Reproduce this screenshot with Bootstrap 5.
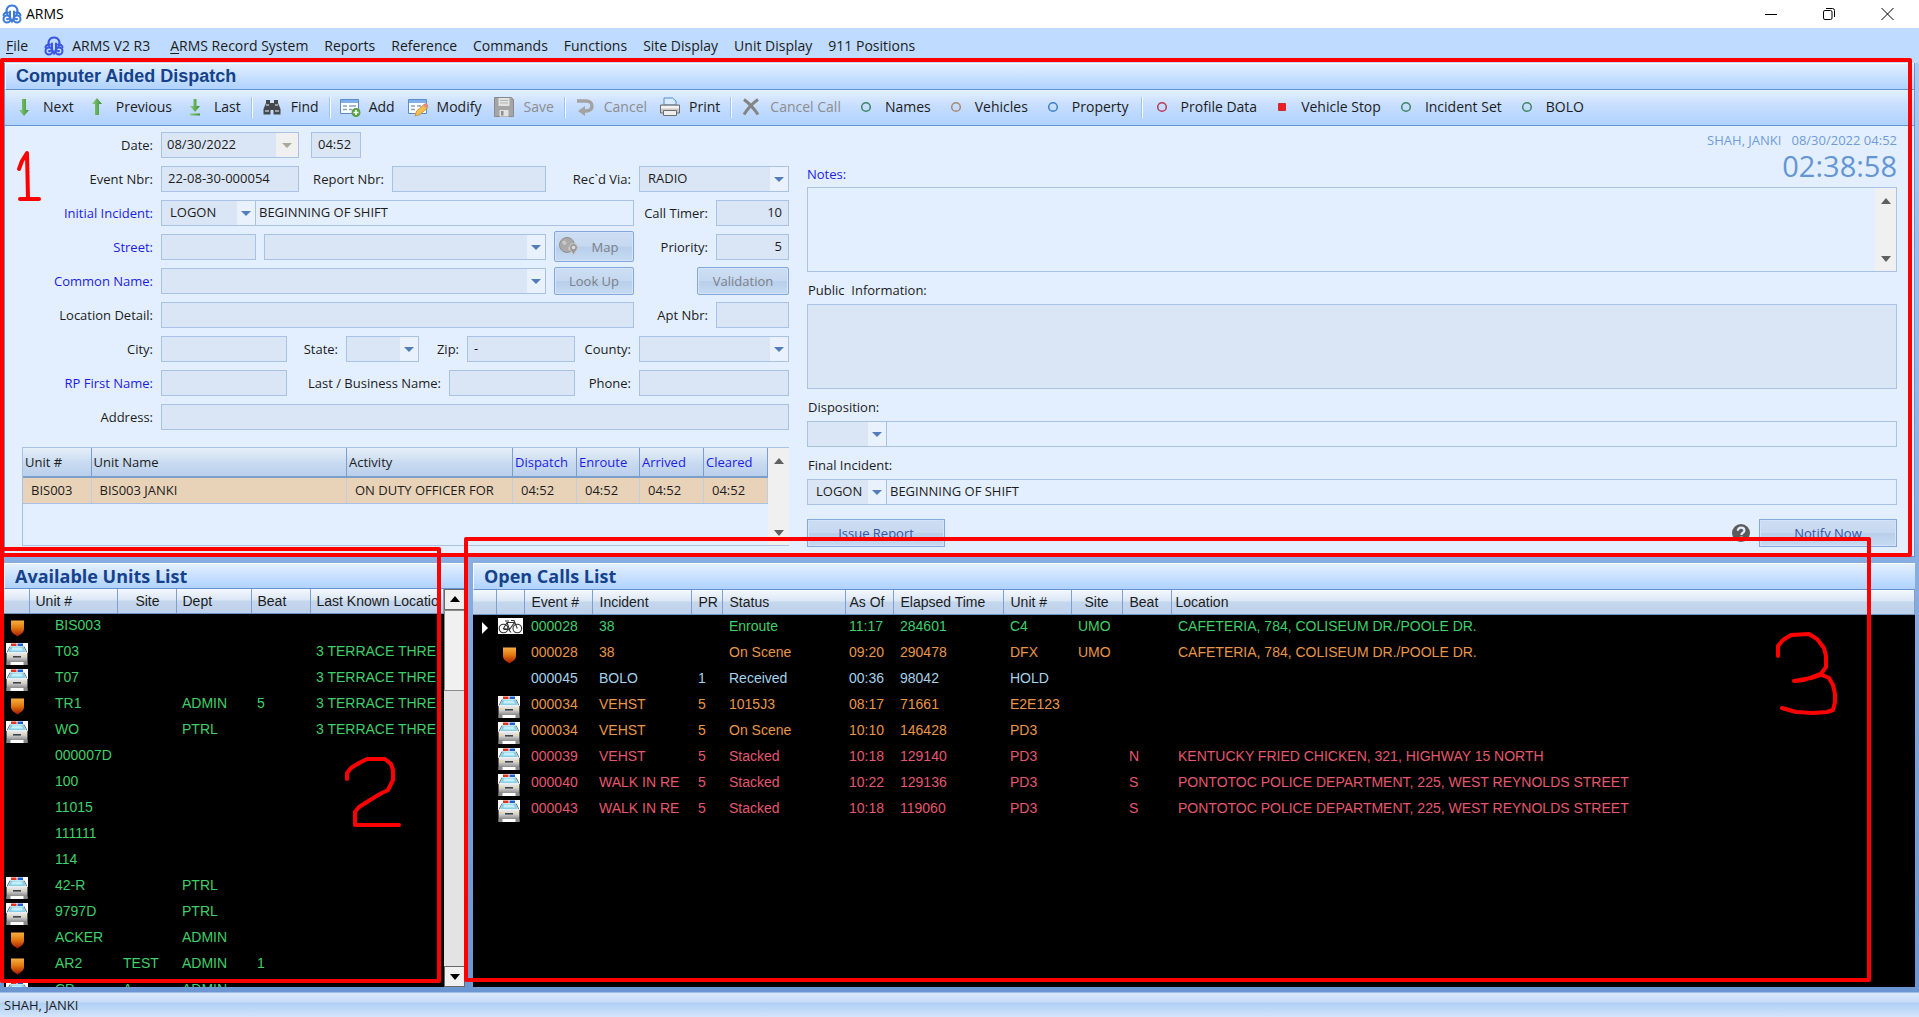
<!DOCTYPE html>
<html lang="en">
<head>
<meta charset="utf-8">
<meta name="viewport" content="width=device-width, initial-scale=1">
<title>ARMS</title>
<link href="https://cdn.jsdelivr.net/npm/bootstrap@5.3.0/dist/css/bootstrap.min.css" rel="stylesheet">
<style>
:root{--edge:#6593cf;--field:#dae6f5;--line:#a9c1e2;--pane:#e3efff;--navy:#15428b;--link:#1c1ce8}
body{font:13px/18px "Open Sans","Noto Sans",sans-serif;color:#1c1c1c;background:#6b96d2;height:100vh;overflow:hidden}
a{color:inherit;text-decoration:none}
button{padding:0;border:0;background:none;color:inherit}
svg{display:block;flex:none}
.title-bar{height:29px;background:#fff;color:#000;font-size:14px;padding:0 25px 0 2px}
.win-btns{gap:46px}
.menu-bar{height:35px;background:#bfdbff;font-size:14px;padding:0 6px;gap:16px}
.menu-bar u{text-underline-offset:2px}
.work{background:linear-gradient(#a9c8f2,#6b96d2);padding:0 4px 5px;gap:6px}
.pane-title{height:27px;margin:0;padding:0 0 0 10px;border:solid #fff;border-width:1px 0 0 1px;background:linear-gradient(#e3efff,#afd2ff);border-bottom:1px solid var(--edge);font:bold 18px/25px "Liberation Sans",Arial,sans-serif;color:var(--navy)}
.list-title{font:bold 18px/24px "Open Sans","Noto Sans",sans-serif;padding-left:10px}
.cad{border:1px solid var(--edge);border-top:0;background:var(--pane)}
.tool-bar{height:36px;padding:0 8px;gap:12px;font-size:14px;background:linear-gradient(#e3efff,#c4dcff 50%,#b0d2ff);border-bottom:1px solid var(--edge)}
.tool-bar button{display:flex;align-items:center;gap:8px;white-space:nowrap}
.tool-bar button:disabled{color:#8d8d8d}
.tool-tail{gap:14px;padding-left:2px}
.ico{width:22px;height:22px}
.split{width:2px;height:21px;margin:0 -4px 0 -2px;background:linear-gradient(90deg,#9ac6ff 50%,#fff 50%)}
.tool-tail .split{margin:0 -6px 0 -2px}
.cad-body{padding:6px 17px 9px 0;gap:18px}
.entry{width:784px;flex:none}
.rows{display:grid;grid-auto-rows:26px;row-gap:8px}
.line{display:flex;align-items:center}
.line label{flex:1;text-align:right;padding-right:8px;white-space:nowrap}
.line label.lead-label{flex:none;width:156px}
.line label.mid-label{flex:none;width:64px}
.line label.zip-label{flex:none;width:48px}
.go{color:var(--link)}
.fld{height:26px;min-width:0;border:1px solid var(--line);border-radius:0;background-color:var(--field);color:#1c1c1c;padding:0 6px 2px;font:inherit;flex:none}
.plain{background-color:var(--pane);padding-left:3px}
select.fld{appearance:none;padding-left:8px;background-image:url("data:image/svg+xml,%3Csvg xmlns='http://www.w3.org/2000/svg' width='18' height='24'%3E%3Crect width='18' height='24' fill='%23e8f1fc'/%3E%3Cpath d='M4 10h10l-5 5z' fill='%23517dbb'/%3E%3C/svg%3E");background-repeat:no-repeat;background-position:right center}
select.off{padding-left:5px;background-image:url("data:image/svg+xml,%3Csvg xmlns='http://www.w3.org/2000/svg' width='22' height='24'%3E%3Crect width='22' height='24' fill='%23f0f0f0'/%3E%3Cpath d='M6 10h10l-5 5z' fill='%23aca899'/%3E%3C/svg%3E")}
.joined{border-left:0}
.clock-in{width:50px;margin-left:12px}
.w73{width:73px}.w80{width:80px}.w92{width:92px}.w95{width:95px}.w108{width:108px}.w126{width:126px}.w138{width:138px}.w150{width:150px}.w154{width:154px}.w282{width:282px}.w378{width:378px}.w385{width:385px}.w473{width:473px}
.act{height:28px;border:1px solid #83a9dc;border-radius:2px;box-shadow:inset 0 0 0 1px #d4e4f8;background:linear-gradient(#cddef3,#c6d9f0 48%,#b9cfea 52%,#c6daf2);color:#7b8088;flex:none}
.act.live{color:#3456a8;border-radius:0;width:138px}
.act.tall{height:31px;margin-top:-2px;margin-bottom:-2px}
.log{border:1px solid var(--line);height:99px;margin:17px 0 0 17px}
.log table{width:745px;table-layout:fixed}
.log th{height:29px;font-weight:400;padding:0 2px;border-right:1px solid #7d9ecb;border-bottom:2px solid #7d9ecb;background:linear-gradient(#e6eff9,#c8daf0 55%,#b9cfeb)}
.log td{height:27px;padding:0 8px 2px;background:#e9d3b8;border-right:1px solid #c3cde0;border-bottom:1px solid #a9c1e2;white-space:nowrap;overflow:hidden}
.bar{width:21px;background:#f0f0f0;display:flex;flex-direction:column;align-items:center;justify-content:space-between;padding:10px 0 9px;flex:none}
.stamp{color:#6f9bd8;line-height:17px;gap:10px}
.clock{color:#6495d4;font-size:29px;line-height:34px}
.box{height:85px;border:1px solid var(--line);background:var(--pane)}
.box textarea{border:0;resize:none;background:none;outline:0}
.box.shade{background:var(--field)}
.cap{height:32px;display:flex;align-items:center;padding:4px 0 0 1px}
.foot-btns{padding-top:14px}
.units{width:461px;flex:none}
.work,.lists,.list-body{min-height:0}
.lists{gap:8px}
.black{background:#000;overflow:hidden;min-height:0}
.grid-list{table-layout:fixed;width:100%;font:14px/22px "Liberation Sans",Arial,sans-serif}
.grid-list th{height:25px;padding:0 0 0 7px;font-weight:400;line-height:20px;white-space:nowrap;overflow:hidden;color:#1c1c1c;background:linear-gradient(#f4f8fd,#dbe7f5 45%,#c5d7ed 50%,#bdd1ea);border-right:1px solid #7f9fcd;border-bottom:1px solid #6f93c8}
.grid-list td{height:26px;padding:0 0 2px 7px;white-space:nowrap;overflow:hidden;vertical-align:top}
.grid-list td:first-child{padding-left:0}
.units .grid-list th{padding-left:6px}
.units .grid-list td{padding-left:6px}
.units .grid-list td:nth-child(2){padding-left:26px}
.units .grid-list td:first-child{padding:0 0 0 2px}
.calls .grid-list td:nth-child(2){padding:0 0 0 2px}
.grid-list svg{margin-top:3px}
.green,.units td{color:#3fcf6b}.orange{color:#e8964a}.ice{color:#a5d2ea}.rose{color:#e4586e}
.scroll{width:21px;background:#e3e3e3;flex:none}
.scroll button{width:21px;height:21px;background:#f0f0f0;border:1px solid #696969;display:grid;place-items:center}
.thumb{height:81px;background:#f0f0f0;border:1px solid #8b8b8b}
.status{height:25px;padding:1px 4px;background:linear-gradient(#d9e8fb,#c6dbf7 38%,#b0cff5 42%,#d3e5fc);border-top:1px solid #9fbfe8}
.ink{position:absolute;left:0;top:0;pointer-events:none;fill:none;stroke:#f00;stroke-width:4}
</style>
<script src="https://cdn.jsdelivr.net/npm/bootstrap@5.3.0/dist/js/bootstrap.bundle.min.js"></script>
</head>
<body class="d-flex flex-column position-relative">
<svg width="0" height="0" class="position-absolute">
<defs>
<linearGradient id="gs" x1="0" y1="0" x2="0" y2="1"><stop offset="0" stop-color="#f6b040"/><stop offset=".45" stop-color="#e37a10"/><stop offset="1" stop-color="#a81800"/></linearGradient>
<linearGradient id="gg" x1="0" y1="0" x2="1" y2="0"><stop offset="0" stop-color="#8fce7c"/><stop offset="1" stop-color="#3a8f35"/></linearGradient>
<linearGradient id="gc" x1="0" y1="0" x2="0" y2="1"><stop offset="0" stop-color="#f2f2f2"/><stop offset=".5" stop-color="#d2d2d2"/><stop offset="1" stop-color="#8c8c8c"/></linearGradient>
<symbol id="logo" viewBox="0 0 20 20"><g fill="none" stroke="currentColor" stroke-width="2" stroke-linecap="round"><path d="M5.500 10.500C3 6 5.500 1.500 10 1.500s7 4.500 4.500 9"/><path d="M8 12V7.500M12 12V7.500"/><path d="M6 8.500c-2.500-.5-4.500 1-4.500 3M14 8.500c2.500-.5 4.500 1 4.500 3"/><circle cx="5" cy="15" r="3.500"/><circle cx="15" cy="15" r="3.500"/><path d="M5 15c1.500.5 3-.5 3-3M15 15c-1.500.5-3-.5-3-3M8.500 15l1.500 2.500 1.500-2.500"/></g></symbol>
<symbol id="shield" viewBox="0 0 22 22"><path d="M5 3.500h13v8.500c0 3.500-3 5-6.500 7.500C8 17 5 15.500 5 12z" fill="url(#gs)"/></symbol>
<symbol id="car" viewBox="0 0 22 22"><path d="M0 0h22v22H0z" fill="#fff"/><path d="M5 .5h5.500V3H5z" fill="#e3321f"/><path d="M11.500 .5H17V3h-5.500z" fill="#1c5fd0"/><path d="M4.500 3.500h13L20 9.500H2z" fill="#86cfe8"/><path d="M6.500 4.500h9l1.500 3H5z" fill="#c4effa"/><path d="M1 9.500l3-6M21 9.500l-3-6" stroke="#777"/><path d="M2 9h18l1.800 3.500V19H.2v-6.500z" fill="url(#gc)"/><path d="M0 10h.7v12H0zM21.300 10h.7v12h-.7z" fill="#222"/><path d="M7 13h8v1.600H7z" fill="#444"/><path d="M1.800 12h2.400v1.800H1.800zM17.800 12h2.400v1.800h-2.400z" fill="#efd98f"/><path d="M1 18.500h3.500V22H1zM17.500 18.500H21V22h-3.500z" fill="#8a8a8a"/></symbol>
<symbol id="bike" viewBox="0 0 25 16"><path d="M0 0h25v16H0z" fill="#fff"/><g fill="none" stroke="#333" stroke-width="1.100"><circle cx="5.500" cy="10.500" r="4.300"/><circle cx="19.300" cy="10.500" r="4.300"/><path d="M5.500 10.500L9 4.500h7.500l-5 7zM9 4.500l2.500 7H5.500M19.300 10.500L16 2.500h-3M7 3h4M11 12l2 2.500"/></g></symbol>
</defs>
</svg>

<header class="title-bar d-flex align-items-center justify-content-between">
  <div class="d-flex align-items-center gap-1"><svg width="20" height="20" color="#3c7bd9"><use href="#logo"/></svg><span>ARMS</span></div>
  <div class="win-btns d-flex align-items-center">
    <button aria-label="Minimize"><svg width="12" height="14" stroke="#000" fill="none"><path d="M0 7.500h12"/></svg></button>
    <button aria-label="Restore"><svg width="12" height="14" stroke="#000" fill="none"><rect x=".5" y="3.500" width="8.500" height="9" rx="1.500"/><path d="M3 1.500h6.500a2 2 0 0 1 2 2V10"/></svg></button>
    <button aria-label="Close"><svg width="13" height="14" stroke="#000" fill="none"><path d="M.5 1l12 12M12.500 1l-12 12"/></svg></button>
  </div>
</header>

<nav class="menu-bar d-flex align-items-center text-nowrap">
  <a href="#"><u>F</u>ile</a>
  <a href="#" class="d-flex align-items-center gap-2 me-1"><svg width="20" height="20" color="#3a55e0"><use href="#logo"/></svg>ARMS V2 R3</a>
  <a href="#"><u>A</u>RMS Record System</a><a href="#">Reports</a><a href="#">Reference</a><a href="#">Commands</a><a href="#">Functions</a><a href="#">Site Display</a><a href="#">Unit Display</a><a href="#">911 Positions</a>
</nav>

<main class="work d-flex flex-column flex-grow-1">
<section class="cad">
  <h1 class="pane-title">Computer Aided Dispatch</h1>
  <div class="tool-bar d-flex align-items-center">
    <button><svg class="ico" viewBox="0 0 22 22"><path d="M9 3h4v11h3l-5 6-5-6h3z" fill="url(#gg)"/></svg>Next</button>
    <button><svg class="ico" viewBox="0 0 22 22"><path d="M9 19h4V8h3l-5-6-5 6h3z" fill="url(#gg)"/></svg>Previous</button>
    <button><svg class="ico" viewBox="0 0 22 22"><path d="M9.500 3h3v7H16l-5 6-5-6h3.500zM6 17.500h10v2H6z" fill="url(#gg)"/></svg>Last</button>
    <span class="split"></span>
    <button><svg class="ico" viewBox="0 0 22 22"><path d="M5 4h4v3h4V4h4v3l2.500 6v5.500h-7V14h-3v4.500h-7V13L5 7z" fill="#44484d"/><path d="M5 9h3M14 9h3M4 15h4M14 15h4" stroke="#b7bcc2" stroke-width="1.500"/></svg>Find</button>
    <span class="split"></span>
    <button><svg class="ico" viewBox="0 0 22 22"><path d="M1.500 3.500h18v14h-18z" fill="#fff" stroke="#5b8bc9"/><path d="M2 4h17v3H2z" fill="#7fb0e8"/><path d="M4 10h4M4 13.500h4M10 10h7M10 13.500h3" stroke="#8aa2c2" stroke-width="1.600"/><circle cx="17" cy="16.500" r="4.500" fill="#5a9e46"/><path d="M17 14v5M14.500 16.500h5" stroke="#fff" stroke-width="1.600"/></svg>Add</button>
    <button><svg class="ico" viewBox="0 0 22 22"><path d="M1.500 3.500h18v14h-18z" fill="#fff" stroke="#5b8bc9"/><path d="M2 4h17v3H2z" fill="#7fb0e8"/><path d="M4 10h4M4 13.500h4M10 10h4" stroke="#8aa2c2" stroke-width="1.600"/><path d="M8 20l1.500-5 8-7 3.500 3.500-8 7z" fill="#f3bf52" stroke="#c98a24" stroke-width=".8"/><path d="M16 9.500l2-2c1-1 4 2 3 3l-1.500 1.500z" fill="#e48a83"/></svg>Modify</button>
    <button disabled><svg class="ico" viewBox="0 0 22 22"><path d="M1.500 1.500h17l2 2v17h-19z" fill="#a5a5a5" stroke="#8a8a8a"/><path d="M5.500 2h11v8h-11zM6.500 14h9v6.500h-9z" fill="#e2e2e2"/><path d="M7 4.500h8M7 7h8" stroke="#b5b5b5"/><path d="M8 15h2.500v4.500H8z" fill="#8d8d8d"/></svg>Save</button>
    <span class="split"></span>
    <button disabled><svg class="ico" viewBox="0 0 22 22"><path d="M3 5h9c8 0 8 10 0 10h-2" fill="none" stroke="#a3a3a3" stroke-width="3.500"/><path d="M11 10v10l-7-5z" fill="#a3a3a3"/></svg>Cancel</button>
    <button><svg class="ico" viewBox="0 0 22 22"><path d="M5 9V2h8.500L17 5v4z" fill="#d9ebff" stroke="#4f8fcb"/><path d="M1.500 9h19v8h-19z" fill="#c9c9c9" stroke="#6d6d6d"/><path d="M2 10h18v2.500H2z" fill="#f2f2f2"/><path d="M4.500 14.500h13v5h-13z" fill="#eee" stroke="#6d6d6d"/></svg>Print</button>
    <span class="split"></span>
    <button disabled><svg class="ico" viewBox="0 0 22 22"><path d="M4 3.500c4 3 10 9 14 15M18 3.500C13 7 8 12 4 18.500" fill="none" stroke="#848484" stroke-width="3"/></svg>Cancel Call</button>
    <div class="tool-tail d-flex align-items-center">
    <button><svg class="ico" viewBox="0 0 22 22"><circle cx="11" cy="11" r="4.300" fill="none" stroke="#3d8560" stroke-width="1.500"/></svg>Names</button>
    <button><svg class="ico" viewBox="0 0 22 22"><circle cx="11" cy="11" r="4.300" fill="none" stroke="#a5896f" stroke-width="1.500"/></svg>Vehicles</button>
    <button><svg class="ico" viewBox="0 0 22 22"><circle cx="11" cy="11" r="4.300" fill="none" stroke="#3d7fc4" stroke-width="1.500"/></svg>Property</button>
    <span class="split"></span>
    <button><svg class="ico" viewBox="0 0 22 22"><circle cx="11" cy="11" r="4.300" fill="none" stroke="#b83a56" stroke-width="1.500"/></svg>Profile Data</button>
    <button><svg class="ico" viewBox="0 0 22 22"><path d="M7.500 7.500h7v7h-7z" fill="#ee1c24" stroke="#c9302c"/></svg>Vehicle Stop</button>
    <button><svg class="ico" viewBox="0 0 22 22"><circle cx="11" cy="11" r="4.300" fill="none" stroke="#3d8560" stroke-width="1.500"/></svg>Incident Set</button>
    <button><svg class="ico" viewBox="0 0 22 22"><circle cx="11" cy="11" r="4.300" fill="none" stroke="#3d8560" stroke-width="1.500"/></svg>BOLO</button>
    </div>
  </div>

  <div class="cad-body d-flex">
    <form class="entry">
      <div class="rows">
        <div class="line"><label class="lead-label" for="date">Date:</label><select id="date" class="fld off w138"><option>08/30/2022</option></select><input class="fld clock-in" aria-label="Time" value="04:52"></div>
        <div class="line"><label class="lead-label" for="ev">Event Nbr:</label><input id="ev" class="fld w138" value="22-08-30-000054"><label for="rep">Report Nbr:</label><input id="rep" class="fld w154"><label for="via">Rec`d Via:</label><select id="via" class="fld w150"><option>RADIO</option></select></div>
        <div class="line"><label class="lead-label go" for="inc">Initial Incident:</label><select id="inc" class="fld w95"><option>LOGON</option></select><input class="fld plain joined w378" aria-label="Incident description" value="BEGINNING OF SHIFT"><label for="timer">Call Timer:</label><input id="timer" class="fld w73 text-end" value="10"></div>
        <div class="line"><label class="lead-label go" for="st">Street:</label><input id="st" class="fld w95"><select class="fld w282 ms-2" aria-label="Street name"><option></option></select><button type="button" class="act tall w80 ms-2 d-flex align-items-center ps-1" disabled><svg width="22" height="22"><circle cx="8" cy="9" r="7.500" fill="#aaa" stroke="#8f8f8f"/><path d="M3 6c3-3 5 0 4 2s-3 1-4-2M9 12c1-2 4-1 4 0l-3 3z" fill="#c9c9c9"/><path d="M14.500 19c-2-4-4-5-4-7.500a4 4 0 0 1 8 0c0 2.500-2 3.500-4 7.500z" fill="#999" stroke="#cfcfcf"/><circle cx="14.500" cy="11.500" r="1.800" fill="#ddd"/></svg><span class="flex-grow-1 pe-1">Map</span></button><label for="pri">Priority:</label><input id="pri" class="fld w73 text-end" value="5"></div>
        <div class="line"><label class="lead-label go" for="cn">Common Name:</label><select id="cn" class="fld w385"><option></option></select><button type="button" class="act w80 ms-2" disabled>Look Up</button><button type="button" class="act w92 ms-auto" disabled>Validation</button></div>
        <div class="line"><label class="lead-label" for="loc">Location Detail:</label><input id="loc" class="fld w473"><label for="apt">Apt Nbr:</label><input id="apt" class="fld w73"></div>
        <div class="line"><label class="lead-label" for="city">City:</label><input id="city" class="fld w126"><label for="state">State:</label><select id="state" class="fld w73"><option></option></select><label class="zip-label" for="zip">Zip:</label><input id="zip" class="fld w108" value="-"><label class="mid-label" for="cty">County:</label><select id="cty" class="fld w150"><option></option></select></div>
        <div class="line"><label class="lead-label go" for="fn">RP First Name:</label><input id="fn" class="fld w126"><label for="ln">Last / Business Name:</label><input id="ln" class="fld w126"><label class="mid-label" for="ph">Phone:</label><input id="ph" class="fld w150"></div>
        <div class="line"><label class="lead-label" for="ad">Address:</label><input id="ad" class="fld flex-grow-1"></div>
      </div>
      <div class="log d-flex justify-content-between">
        <div><table>
          <colgroup><col style="width:68px"><col><col style="width:166px"><col style="width:64px"><col style="width:63px"><col style="width:64px"><col style="width:64px"></colgroup>
          <thead><tr><th>Unit #</th><th>Unit Name</th><th>Activity</th><th class="go">Dispatch</th><th class="go">Enroute</th><th class="go">Arrived</th><th class="go">Cleared</th></tr></thead>
          <tbody><tr><td>BIS003</td><td>BIS003 JANKI</td><td>ON DUTY OFFICER FOR</td><td>04:52</td><td>04:52</td><td>04:52</td><td>04:52</td></tr></tbody>
        </table></div>
        <div class="bar"><svg width="10" height="6"><path d="M0 6h10L5 0z" fill="#606060"/></svg><svg width="10" height="6"><path d="M0 0h10L5 6z" fill="#606060"/></svg></div>
      </div>
    </form>

    <div class="flex-grow-1">
      <div class="d-flex justify-content-between">
        <label class="go align-self-end" for="notes">Notes:</label>
        <div class="text-end"><div class="stamp d-flex"><span>SHAH, JANKI</span><span>08/30/2022 04:52</span></div><div class="clock">02:38:58</div></div>
      </div>
      <div class="box d-flex mt-1"><textarea id="notes" class="flex-grow-1"></textarea><div class="bar"><svg width="10" height="6"><path d="M0 6h10L5 0z" fill="#606060"/></svg><svg width="10" height="6"><path d="M0 0h10L5 6z" fill="#606060"/></svg></div></div>
      <label class="cap" for="pub">Public&nbsp; Information:</label>
      <div class="box shade d-flex"><textarea id="pub" class="flex-grow-1"></textarea></div>
      <label class="cap" for="disp">Disposition:</label>
      <div class="d-flex"><select id="disp" class="fld w80"><option></option></select><input class="fld plain joined flex-grow-1" aria-label="Disposition description"></div>
      <label class="cap" for="fin">Final Incident:</label>
      <div class="d-flex"><select id="fin" class="fld w80"><option>LOGON</option></select><input class="fld plain joined flex-grow-1" aria-label="Final incident description" value="BEGINNING OF SHIFT"></div>
      <div class="foot-btns d-flex align-items-center"><button class="act live">Issue Report</button>
        <svg class="ms-auto me-2" width="20" height="20"><circle cx="10" cy="10" r="9" fill="#5c5c5c"/><path d="M6.800 7.800c0-4.500 6.600-4 6.600-.4 0 2.300-3 2.200-3 4.600M10.400 13.600v2.200" stroke="#e3efff" stroke-width="2.200" fill="none"/></svg>
        <button class="act live">Notify Now</button></div>
    </div>
  </div>
</section>

<div class="lists d-flex flex-grow-1">
  <section class="units d-flex flex-column">
    <h2 class="pane-title list-title">Available Units List</h2>
    <div class="list-body d-flex flex-grow-1">
      <div class="black flex-grow-1">
        <table class="grid-list">
          <colgroup><col style="width:25px"><col style="width:88px"><col style="width:59px"><col style="width:75px"><col style="width:59px"><col></colgroup>
          <thead><tr><th></th><th>Unit #</th><th class="text-end pe-3">Site</th><th>Dept</th><th>Beat</th><th>Last Known Locatio</th></tr></thead>
          <tbody>
            <tr><td><svg width="22" height="22"><use href="#shield"/></svg></td><td>BIS003</td><td></td><td></td><td></td><td></td></tr>
            <tr><td><svg width="22" height="22"><use href="#car"/></svg></td><td>T03</td><td></td><td></td><td></td><td>3 TERRACE THRE</td></tr>
            <tr><td><svg width="22" height="22"><use href="#car"/></svg></td><td>T07</td><td></td><td></td><td></td><td>3 TERRACE THRE</td></tr>
            <tr><td><svg width="22" height="22"><use href="#shield"/></svg></td><td>TR1</td><td></td><td>ADMIN</td><td>5</td><td>3 TERRACE THRE</td></tr>
            <tr><td><svg width="22" height="22"><use href="#car"/></svg></td><td>WO</td><td></td><td>PTRL</td><td></td><td>3 TERRACE THRE</td></tr>
            <tr><td></td><td>000007D</td><td></td><td></td><td></td><td></td></tr>
            <tr><td></td><td>100</td><td></td><td></td><td></td><td></td></tr>
            <tr><td></td><td>11015</td><td></td><td></td><td></td><td></td></tr>
            <tr><td></td><td>111111</td><td></td><td></td><td></td><td></td></tr>
            <tr><td></td><td>114</td><td></td><td></td><td></td><td></td></tr>
            <tr><td><svg width="22" height="22"><use href="#car"/></svg></td><td>42-R</td><td></td><td>PTRL</td><td></td><td></td></tr>
            <tr><td><svg width="22" height="22"><use href="#car"/></svg></td><td>9797D</td><td></td><td>PTRL</td><td></td><td></td></tr>
            <tr><td><svg width="22" height="22"><use href="#shield"/></svg></td><td>ACKER</td><td></td><td>ADMIN</td><td></td><td></td></tr>
            <tr><td><svg width="22" height="22"><use href="#shield"/></svg></td><td>AR2</td><td>TEST</td><td>ADMIN</td><td>1</td><td></td></tr>
            <tr><td><svg width="22" height="22"><use href="#car"/></svg></td><td>CP</td><td>A</td><td>ADMIN</td><td></td><td></td></tr>
          </tbody>
        </table>
      </div>
      <div class="scroll d-flex flex-column">
        <button aria-label="Scroll up"><svg width="10" height="6"><path d="M0 6h10L5 0z"/></svg></button>
        <div class="thumb"></div>
        <button class="mt-auto" aria-label="Scroll down"><svg width="10" height="6"><path d="M0 0h10L5 6z"/></svg></button>
      </div>
    </div>
  </section>

  <section class="calls d-flex flex-column flex-grow-1">
    <h2 class="pane-title list-title">Open Calls List</h2>
    <div class="black flex-grow-1">
      <table class="grid-list">
        <colgroup><col style="width:23px"><col style="width:28px"><col style="width:68px"><col style="width:99px"><col style="width:31px"><col style="width:123px"><col style="width:48px"><col style="width:110px"><col style="width:68px"><col style="width:51px"><col style="width:49px"><col></colgroup>
        <thead><tr><th></th><th></th><th>Event #</th><th>Incident</th><th>PR</th><th>Status</th><th class="ps-1">As Of</th><th>Elapsed Time</th><th>Unit #</th><th class="text-center ps-0">Site</th><th>Beat</th><th class="ps-1">Location</th></tr></thead>
        <tbody>
          <tr class="green"><td><svg width="16" height="20"><path d="M9 4l6 6-6 6z" fill="#fff"/></svg></td><td><svg width="25" height="16"><use href="#bike"/></svg></td><td>000028</td><td>38</td><td></td><td>Enroute</td><td class="ps-1">11:17</td><td>284601</td><td>C4</td><td>UMO</td><td></td><td>CAFETERIA, 784, COLISEUM DR./POOLE DR.</td></tr>
          <tr class="orange"><td></td><td><svg width="22" height="22"><use href="#shield"/></svg></td><td>000028</td><td>38</td><td></td><td>On Scene</td><td class="ps-1">09:20</td><td>290478</td><td>DFX</td><td>UMO</td><td></td><td>CAFETERIA, 784, COLISEUM DR./POOLE DR.</td></tr>
          <tr class="ice"><td></td><td></td><td>000045</td><td>BOLO</td><td>1</td><td>Received</td><td class="ps-1">00:36</td><td>98042</td><td>HOLD</td><td></td><td></td><td></td></tr>
          <tr class="orange"><td></td><td><svg width="22" height="22"><use href="#car"/></svg></td><td>000034</td><td>VEHST</td><td>5</td><td>1015J3</td><td class="ps-1">08:17</td><td>71661</td><td>E2E123</td><td></td><td></td><td></td></tr>
          <tr class="orange"><td></td><td><svg width="22" height="22"><use href="#car"/></svg></td><td>000034</td><td>VEHST</td><td>5</td><td>On Scene</td><td class="ps-1">10:10</td><td>146428</td><td>PD3</td><td></td><td></td><td></td></tr>
          <tr class="rose"><td></td><td><svg width="22" height="22"><use href="#car"/></svg></td><td>000039</td><td>VEHST</td><td>5</td><td>Stacked</td><td class="ps-1">10:18</td><td>129140</td><td>PD3</td><td></td><td>N</td><td>KENTUCKY FRIED CHICKEN, 321, HIGHWAY 15 NORTH</td></tr>
          <tr class="rose"><td></td><td><svg width="22" height="22"><use href="#car"/></svg></td><td>000040</td><td>WALK IN RE</td><td>5</td><td>Stacked</td><td class="ps-1">10:22</td><td>129136</td><td>PD3</td><td></td><td>S</td><td>PONTOTOC POLICE DEPARTMENT, 225, WEST REYNOLDS STREET</td></tr>
          <tr class="rose"><td></td><td><svg width="22" height="22"><use href="#car"/></svg></td><td>000043</td><td>WALK IN RE</td><td>5</td><td>Stacked</td><td class="ps-1">10:18</td><td>119060</td><td>PD3</td><td></td><td>S</td><td>PONTOTOC POLICE DEPARTMENT, 225, WEST REYNOLDS STREET</td></tr>
        </tbody>
      </table>
    </div>
  </section>
</div>
</main>
<footer class="status d-flex align-items-center">SHAH, JANKI</footer>

<!-- hand-drawn markup over the window -->
<svg class="ink" width="100%" height="100%" stroke-linejoin="round" stroke-linecap="round">
  <rect x="2" y="60" width="1908" height="495"/><rect x="2" y="549" width="437" height="432"/><rect x="466" y="539" width="1403" height="441"/>
  <path d="M19 169l3-8 5-8 1 46M20 199h19"/>
  <path d="M347 779v-6l4-5 8-5 8-4h18l6 5 2 6v10l-5 10-8 4-10 6-11 7-4 5v13h44"/>
  <path d="M1778 656v-10l5-6 8-5 18-1 8 5 7 9 2 8v11l-6 8-9 3-17 3 10-1 16-6 9 4 4 7 2 9v8l-2 8-6 2-14 1-17-1-14-4"/>
</svg>
</body>
</html>
